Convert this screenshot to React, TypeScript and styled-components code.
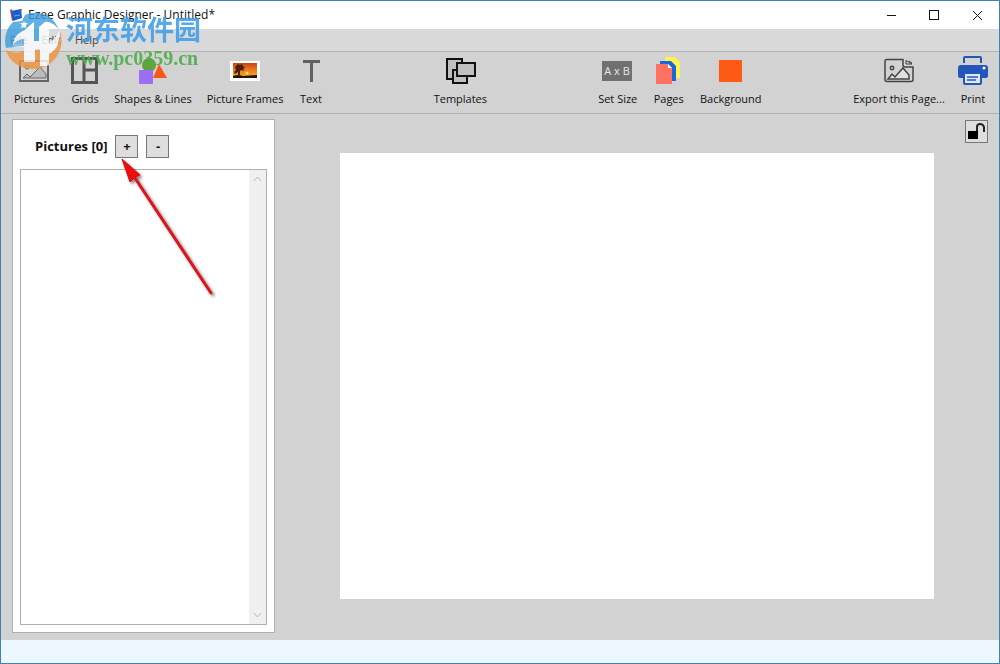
import React from "react";
import styled, { createGlobalStyle } from "styled-components";

const GlobalStyle = createGlobalStyle`
  *, *::before, *::after { box-sizing: border-box; }
  html, body { margin: 0; padding: 0; }
  body { font-family: "Open Sans", "Noto Sans", sans-serif; font-size: 11px; color: #111; }
  button { font: inherit; color: inherit; }
`;

const Window = styled.div`
  position: relative;
  display: flex;
  flex-direction: column;
  min-height: 100vh;
  border: 1px solid #3f83b5;
  background: #d2d2d2;
`;

const TitleBar = styled.header`
  display: flex;
  align-items: center;
  height: 28px;
  padding-left: 8px;
  background: #fff;
`;

const Title = styled.h1`
  flex: 1;
  margin: 0 0 0 5px;
  font-size: 12px;
  line-height: 16px;
  font-weight: 400;
`;

const CaptionButton = styled.button`
  display: grid;
  place-items: center;
  width: 43px;
  height: 28px;
  padding: 0;
  border: 0;
  background: transparent;
`;

const MenuBar = styled.nav`
  display: flex;
  align-items: center;
  height: 22px;
  padding: 0 2px;
  background: #dadada;
`;

const MenuItem = styled.button`
  padding: 0 7px;
  border: 0;
  background: transparent;
  color: #444;
  line-height: 20px;
`;

const Toolbar = styled.div`
  display: flex;
  height: 63px;
  padding: 0 4px 0 8px;
  border-top: 1px solid #b4b4b4;
  border-bottom: 1px solid #b0b0b0;
  background: #d2d2d2;
`;

const Spacer = styled.div<{ $grow: number }>`
  flex: ${(p) => p.$grow} 1 0;
`;

const ToolButton = styled.button<{ $width: number }>`
  display: flex;
  flex-direction: column;
  align-items: center;
  flex: 0 0 ${(p) => p.$width}px;
  padding: 3px 0 0;
  border: 0;
  background: transparent;
  line-height: 16px;
  white-space: nowrap;

  svg { display: block; margin-bottom: 4px; }
`;

const Workspace = styled.main`
  display: flex;
  flex: 1;
  padding: 5px 0 7px 11px;
`;

const SidePanel = styled.aside`
  display: flex;
  flex-direction: column;
  flex: 0 0 263px;
  padding: 0 7px 7px;
  border: 1px solid #b0b0b0;
  background: #fff;
`;

const PanelHeader = styled.div`
  display: flex;
  align-items: center;
  gap: 8px;
  height: 49px;
  padding: 3px 0 0 15px;
`;

const PanelTitle = styled.h2`
  margin: 0;
  font-size: 13px;
  line-height: 16px;
  font-weight: 700;
`;

const SquareButton = styled.button`
  display: grid;
  place-items: center;
  width: 23px;
  height: 23px;
  padding: 0;
  border: 1px solid #777;
  background: #dedede;
  font-size: 13px;
  line-height: 16px;
  font-weight: 700;
`;

const PictureList = styled.div`
  display: flex;
  flex: 1;
  justify-content: flex-end;
  border: 1px solid #b0b0b0;
`;

const ScrollTrack = styled.div`
  display: flex;
  flex-direction: column;
  justify-content: space-between;
  width: 17px;
  background: #f0f0f0;
`;

const ScrollButton = styled.button`
  display: grid;
  place-items: center;
  height: 18px;
  padding: 0;
  border: 0;
  background: transparent;
`;

const Stage = styled.section`
  position: relative;
  display: grid;
  place-items: center;
  flex: 1;
`;

const Canvas = styled.div`
  width: 82%;
  aspect-ratio: 4 / 3;
  background: #fff;
`;

const LockButton = styled(SquareButton)`
  position: absolute;
  top: 1px;
  right: 11px;
`;

const StatusBar = styled.footer`
  height: 23px;
  background: #edf7fe;
`;

const Watermark = styled.div`
  position: absolute;
  top: 9px;
  left: 3px;
  display: flex;
  gap: 3px;
  pointer-events: none;
`;

const WatermarkText = styled.div`
  display: flex;
  flex-direction: column;
  white-space: nowrap;
`;

const SiteName = styled.span`
  color: #3c9be6;
  opacity: 0.85;
  font: 700 27px/38px "Noto Sans CJK SC", sans-serif;
`;

const SiteUrl = styled.span`
  color: #4fae4c;
  opacity: 0.9;
  font: 700 20px/20px "Liberation Serif", serif;
`;

const Pointer = styled.svg`
  position: absolute;
  top: 154px;
  left: 116px;
  pointer-events: none;
`;

const AppIcon = () => (
  <svg width="14" height="14" viewBox="0 0 14 14" aria-hidden="true">
    <path d="M1 2l2-1 2 11-2 1z" fill="#e43c35" />
    <path d="M2 3l10-2 1 9-9 3z" fill="#1560cc" />
    <path d="M5 8l6-1" stroke="#6aa8f5" />
    <circle cx="12" cy="2" r="1" fill="#e43c35" />
  </svg>
);

const PicturesIcon = () => (
  <svg width="32" height="32" viewBox="0 0 32 32" aria-hidden="true">
    <rect x="1" y="6" width="28" height="20" fill="#d2d2d2" stroke="#666" strokeWidth="2" />
    <circle cx="8" cy="12" r="2" fill="#eee" stroke="#666" />
    <path d="M4 23l4-4 3 3 3-3 7-7 6 7v4z" fill="#bcbcbc" stroke="#666" />
  </svg>
);

const GridsIcon = () => (
  <svg width="32" height="32" viewBox="0 0 32 32" fill="none" stroke="#555" strokeWidth="3" aria-hidden="true">
    <rect x="3.500" y="3.500" width="24" height="24" />
    <path d="M15 3v25M15 15h13" />
  </svg>
);

const ShapesIcon = () => (
  <svg width="32" height="32" viewBox="0 0 32 32" aria-hidden="true">
    <circle cx="12" cy="10" r="7" fill="#63a33b" />
    <path d="M22 9l8 14H16z" fill="#fa5716" />
    <rect x="2" y="15" width="14" height="14" rx="1" fill="#9b6ef3" />
  </svg>
);

const FramesIcon = () => (
  <svg width="32" height="32" viewBox="0 0 32 32" aria-hidden="true">
    <defs>
      <linearGradient id="sunset" x1="0" y1="0" x2="0" y2="1">
        <stop offset="0" stopColor="#c9431b" />
        <stop offset="0.5" stopColor="#ef7d1c" />
        <stop offset="1" stopColor="#f8b428" />
      </linearGradient>
    </defs>
    <rect x="1" y="6" width="30" height="20" fill="#fff" />
    <rect x="4" y="8" width="24" height="15" fill="url(#sunset)" />
    <path d="M4 21q5-2 10 0l14-1v3H4z" fill="#20160c" />
    <path d="M6 12l2-2 1-1 2 1 2-1 1 2 2 2-2 1 1 2-3-1-1 1v5h-2v-4l-3 2-1-2 2-2z" fill="#4a1f0d" />
    <circle cx="18" cy="18" r="1.500" fill="#ffe264" />
  </svg>
);

const TextIcon = () => (
  <svg width="32" height="32" viewBox="0 0 32 32" fill="none" stroke="#606060" aria-hidden="true">
    <path d="M8 6.500h17M16.500 6v21" strokeWidth="3" />
  </svg>
);

const TemplatesIcon = () => (
  <svg width="32" height="32" viewBox="0 0 32 32" fill="#c0c0c0" stroke="#111" strokeWidth="2" aria-hidden="true">
    <rect x="3" y="4" width="15" height="20" />
    <rect x="9" y="15" width="14" height="13" />
    <rect x="13" y="8" width="18" height="13" />
  </svg>
);

const SizeIcon = () => (
  <svg width="32" height="32" viewBox="0 0 32 32" aria-hidden="true">
    <rect x="0" y="6" width="30" height="20" fill="#707070" />
    <text x="15" y="20" textAnchor="middle" fontSize="11" fill="#e8e8e8">A x B</text>
  </svg>
);

const PagesIcon = () => (
  <svg width="32" height="32" viewBox="0 0 32 32" aria-hidden="true">
    <path d="M12 4q0-2 2-2h8l5 5v16H12z" fill="#fff34d" />
    <path d="M7 6h11l5 5v15H7z" fill="#1768db" />
    <path d="M3 9h12l4 4v16H3z" fill="#ff7261" />
    <path d="M15 9v4h4z" fill="#fff" />
  </svg>
);

const BackgroundIcon = () => (
  <svg width="32" height="32" viewBox="0 0 32 32" aria-hidden="true">
    <rect x="4" y="5" width="23" height="22" fill="#ff5a14" />
  </svg>
);

const ExportIcon = () => (
  <svg width="32" height="32" viewBox="0 0 32 32" fill="none" stroke="#444" strokeWidth="1.500" aria-hidden="true">
    <path d="M20 4.500H4q-2 0-2 2v18q0 2 2 2h24q2 0 2-2V12h-8q-2 0-2-2z" />
    <path d="M23 5.500v3.500h6zM26 6l3 2" strokeWidth="1" />
    <circle cx="9" cy="13" r="1.700" />
    <path d="M5 24l4-5 3 3 8-9 6 7v4z" fill="#e0e0e0" />
  </svg>
);

const PrintIcon = () => (
  <svg width="32" height="32" viewBox="0 0 32 32" aria-hidden="true">
    <path d="M7 8V3q0-1 1-1h15q1 0 1 1v5" fill="none" stroke="#2356b8" strokeWidth="2" />
    <path d="M4 10h24q3 0 3 3v8q0 2-2 2h-4v-4H7v4H3q-2 0-2-2v-8q0-3 3-3z" fill="#2356b8" />
    <rect x="7" y="18" width="17" height="11" rx="1" fill="#dce7f7" stroke="#2356b8" strokeWidth="2" />
    <path d="M10 22h11M10 25h9" stroke="#2356b8" strokeWidth="1.500" />
    <circle cx="27" cy="13" r="1.500" fill="#fff" />
  </svg>
);

const LockIcon = () => (
  <svg width="19" height="19" viewBox="0 0 19 19" aria-hidden="true">
    <rect x="1" y="9" width="10" height="8" fill="#000" />
    <path d="M10 9V5q0-3 3-3t4 3v5" fill="none" stroke="#222" strokeWidth="2" />
  </svg>
);

const SiteLogo = () => (
  <svg width="59" height="59" viewBox="0 0 59 59" opacity="0.82" aria-hidden="true">
    <path d="M2 38C-1 27 4 16 9 12l9-1 3-6C35-1 50 6 55 20c-4-6-10-9-14-8l-6 5v14h-5V12l-9 8C11 25 8 31 10 37z" fill="#3f9fdf" />
    <path d="M20 11l1 2 3 0-2 2 0 3-2-1-3 1 1-3-2-2h3z" fill="#fff" />
    <path d="M10 37c-2-9 4-14 11-17l9-8v19h5V17l10-5v21c6-4 9-8 10-13 2 13-3 20-10 24v12h-9V39h-5v13H20V37z" fill="#fbfdff" />
    <path d="M10 33c3-2 6-4 10-4v7c-5 0-8 1-11 1z" fill="#75bae8" />
    <path d="M2 40q9 5 18 1v11h11V40h5v16h9V44C53 40 57 31 56 21 62 39 50 58 31 59 16 59 5 52 2 40z" fill="#ef9440" />
  </svg>
);

type Tool = { label: string; width: number; Icon: () => React.JSX.Element };

const toolGroups: { grow: number; tools: Tool[] }[] = [
  {
    grow: 0,
    tools: [
      { label: "Pictures", width: 51, Icon: PicturesIcon },
      { label: "Grids", width: 50, Icon: GridsIcon },
      { label: "Shapes & Lines", width: 86, Icon: ShapesIcon },
      { label: "Picture Frames", width: 98, Icon: FramesIcon },
      { label: "Text", width: 34, Icon: TextIcon },
    ],
  },
  { grow: 5, tools: [{ label: "Templates", width: 64, Icon: TemplatesIcon }] },
  {
    grow: 5,
    tools: [
      { label: "Set Size", width: 50, Icon: SizeIcon },
      { label: "Pages", width: 52, Icon: PagesIcon },
      { label: "Background", width: 72, Icon: BackgroundIcon },
    ],
  },
  {
    grow: 4,
    tools: [
      { label: "Export this Page...", width: 104, Icon: ExportIcon },
      { label: "Print", width: 44, Icon: PrintIcon },
    ],
  },
];

export default function App() {
  return (
    <>
      <GlobalStyle />
      <Window>
        <TitleBar>
          <AppIcon />
          <Title>Ezee Graphic Designer - Untitled*</Title>
          <CaptionButton aria-label="Minimize">
            <svg width="11" height="11"><path d="M1 5.500h9" stroke="#111" /></svg>
          </CaptionButton>
          <CaptionButton aria-label="Maximize">
            <svg width="11" height="11"><rect x="0.500" y="0.500" width="9" height="9" fill="none" stroke="#111" /></svg>
          </CaptionButton>
          <CaptionButton aria-label="Close">
            <svg width="11" height="11"><path d="M1 1l9 9M10 1l-9 9" stroke="#111" /></svg>
          </CaptionButton>
        </TitleBar>
        <MenuBar>
          {["File", "Edit", "Help"].map((name) => (
            <MenuItem key={name}>{name}</MenuItem>
          ))}
        </MenuBar>
        <Toolbar role="toolbar">
          {toolGroups.map((group, i) => (
            <React.Fragment key={i}>
              {group.grow > 0 && <Spacer $grow={group.grow} />}
              {group.tools.map(({ label, width, Icon }) => (
                <ToolButton key={label} $width={width}>
                  <Icon />
                  {label}
                </ToolButton>
              ))}
            </React.Fragment>
          ))}
        </Toolbar>
        <Workspace>
          <SidePanel>
            <PanelHeader>
              <PanelTitle>Pictures [0]</PanelTitle>
              <SquareButton aria-label="Add picture">+</SquareButton>
              <SquareButton aria-label="Remove picture">-</SquareButton>
            </PanelHeader>
            <PictureList>
              <ScrollTrack>
                <ScrollButton aria-label="Scroll up">
                  <svg width="9" height="6"><path d="M1 5l3.500-4L8 5" fill="none" stroke="#bbb" /></svg>
                </ScrollButton>
                <ScrollButton aria-label="Scroll down">
                  <svg width="9" height="6"><path d="M1 1l3.500 4L8 1" fill="none" stroke="#bbb" /></svg>
                </ScrollButton>
              </ScrollTrack>
            </PictureList>
          </SidePanel>
          <Stage>
            <Canvas />
            <LockButton aria-label="Unlock">
              <LockIcon />
            </LockButton>
          </Stage>
        </Workspace>
        <StatusBar />
        <Watermark>
          <SiteLogo />
          <WatermarkText>
            <SiteName>河东软件园</SiteName>
            <SiteUrl>www.pc0359.cn</SiteUrl>
          </WatermarkText>
        </Watermark>
        <Pointer width="106" height="150" viewBox="0 0 106 150" aria-hidden="true">
          <defs>
            <filter id="shadow" x="-20%" y="-20%" width="140%" height="140%">
              <feDropShadow dx="2" dy="2" stdDeviation="1.500" floodColor="#000" floodOpacity="0.5" />
            </filter>
          </defs>
          <g filter="url(#shadow)">
            <path d="M16 20L94 138" stroke="#d9131a" strokeWidth="3" strokeLinecap="round" />
            <path d="M5 4l18 16-5 2-5 5z" fill="#f00d0d" stroke="#d01010" />
          </g>
        </Pointer>
      </Window>
    </>
  );
}
